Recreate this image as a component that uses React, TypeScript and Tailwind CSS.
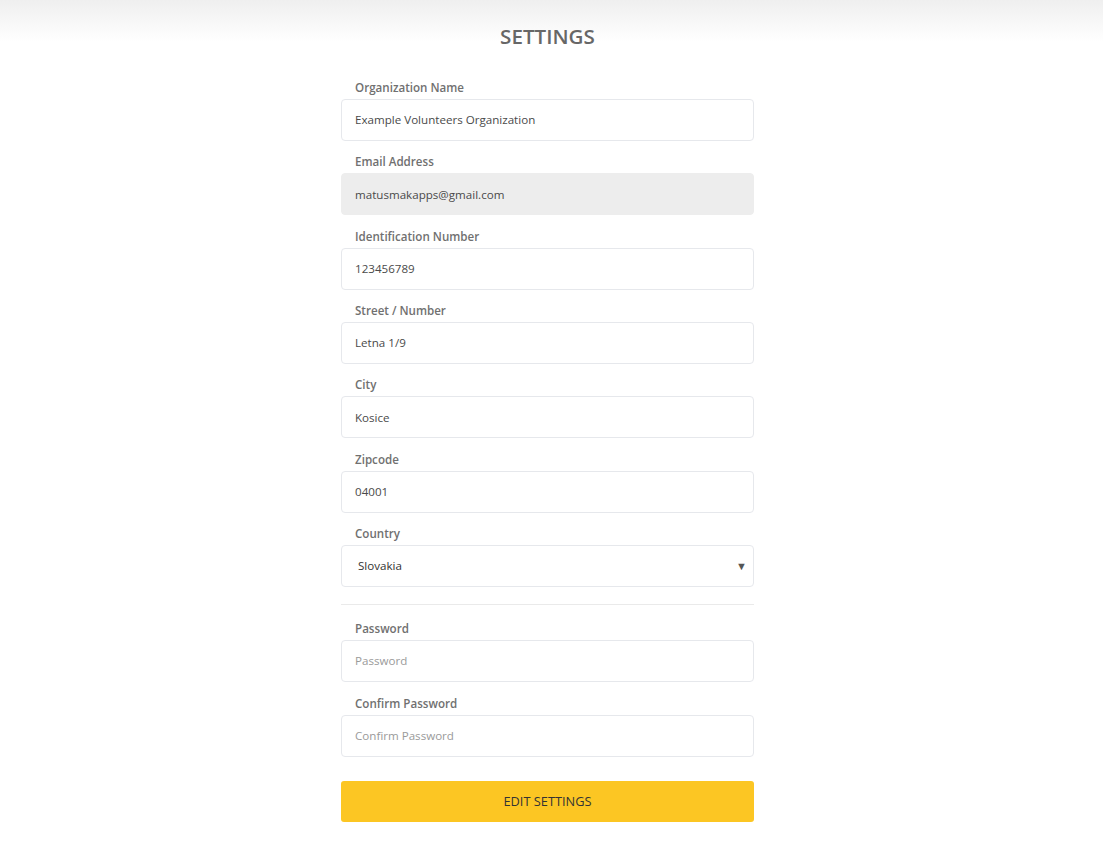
import React from "react";

const fields: { label: string; value: string; disabled?: boolean }[] = [
  { label: "Organization Name", value: "Example Volunteers Organization" },
  { label: "Email Address", value: "matusmakapps@gmail.com", disabled: true },
  { label: "Identification Number", value: "123456789" },
  { label: "Street / Number", value: "Letna 1/9" },
  { label: "City", value: "Kosice" },
  { label: "Zipcode", value: "04001" },
];

function Label({ children }: { children: React.ReactNode }) {
  return (
    <div className="h-[18px] leading-[18px] px-[14px] mb-[2px] text-[11.6px] font-semibold text-[#707070]">
      {children}
    </div>
  );
}

export default function App() {
  return (
    <div
      className="min-h-[854px] w-full pr-[8px] bg-[linear-gradient(to_bottom,#efefef_0px,#ffffff_42px)] text-[#444]"
      style={{ fontFamily: '"Open Sans", "Liberation Sans", sans-serif' }}
    >
      <h1 className="pt-[22px] h-[78px] text-center text-[20.6px] leading-[28px] font-semibold text-[#676767]">
        SETTINGS
      </h1>
      <div className="mx-auto w-[413px] flex flex-col pt-[1px]">
        {fields.map((f) => (
          <div key={f.label} className="mb-[12.33px]">
            <Label>{f.label}</Label>
            <div
              className={
                "h-[42px] rounded-[4px] border flex items-center px-[13px] text-[11.6px] " +
                (f.disabled
                  ? "bg-[#ededed] border-[#ededed] text-[#4a4a4a]"
                  : "bg-white border-[#e6e8ec] text-[#4a4a4a]")
              }
            >
              {f.value}
            </div>
          </div>
        ))}
        <div>
          <Label>Country</Label>
          <div className="h-[42px] rounded-[4px] border border-[#e6e8ec] bg-white flex items-center justify-between pl-[16px] pr-[6px] text-[11.6px] text-[#333]">
            <span>Slovakia</span>
            <span className="text-[11px] text-[#555]">▼</span>
          </div>
        </div>
        <div className="mt-[17px] mb-[15px] h-px bg-[#eaeaea]" />
        <div className="mb-[13px]">
          <Label>Password</Label>
          <div className="mt-[1px] h-[42px] rounded-[4px] border border-[#e6e8ec] bg-white flex items-center px-[13px] text-[11.6px] text-[#9a9a9a]">
            Password
          </div>
        </div>
        <div>
          <Label>Confirm Password</Label>
          <div className="mt-[1px] h-[42px] rounded-[4px] border border-[#e6e8ec] bg-white flex items-center px-[13px] text-[11.6px] text-[#9a9a9a]">
            Confirm Password
          </div>
        </div>
        <button className="mt-[24px] h-[41px] w-full rounded-[3px] bg-[#fcc623] text-[12.8px] font-medium text-[#333] flex items-center justify-center">
          EDIT SETTINGS
        </button>
      </div>
    </div>
  );
}
